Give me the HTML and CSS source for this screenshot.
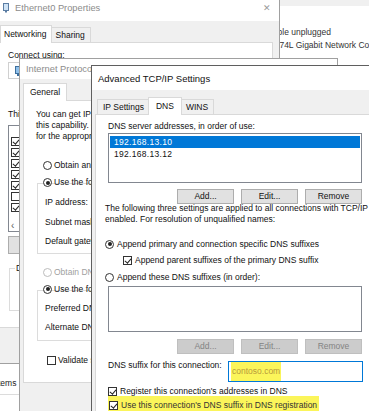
FILE: index.html
```html
<!DOCTYPE html>
<html lang="en">
<head>
    <meta charset="UTF-8">
    <meta name="viewport" content="width=device-width, initial-scale=1.0">
    <title>Advanced TCP/IP Settings</title>
    <link rel="stylesheet" href="styles.css">
</head>
<body>
<div class="desktop">

    <!-- Network Connections folder behind the dialogs -->
    <div class="win explorer">
        <div class="explorer-top"></div>
        <div class="explorer-item">
            <span>Network cable unplugged</span>
            <span>Intel(R) 82574L Gigabit Network Connection</span>
        </div>
        <div class="explorer-status">4 items</div>
    </div>

    <!-- Ethernet0 Properties -->
    <div class="win eth">
        <div class="titlebar inactive">
            <svg class="app-icon" width="6" height="10" viewBox="0 0 6 10">
                <rect x="0.5" y="0.5" width="5" height="7" fill="#cfe3f5" stroke="#5b7da3"/>
                <rect x="2" y="7.5" width="2" height="2" fill="#5b7da3"/>
            </svg>
            <span>Ethernet0 Properties</span>
            <span class="close">&#x2715;</span>
        </div>
        <div class="tabs">
            <span class="tab active">Networking</span>
            <span class="tab">Sharing</span>
        </div>
        <div class="page eth-page">
            <div class="label">Connect using:</div>
            <div class="adapter">
                <svg width="7" height="10" viewBox="0 0 7 10">
                    <rect x="0.5" y="0.5" width="6" height="7" fill="#8fc0ea" stroke="#3d6f9e"/>
                    <rect x="2" y="8" width="3" height="2" fill="#3d6f9e"/>
                </svg>
                <span>Intel(R) 82574L Gigabit Network Connection</span>
            </div>
            <div class="label items-label">This connection uses the following items:</div>
            <div class="items">
                <div class="item"><span class="check on"></span>Client for Microsoft Networks</div>
                <div class="item"><span class="check on"></span>File and Printer Sharing</div>
                <div class="item"><span class="check on"></span>QoS Packet Scheduler</div>
                <div class="item"><span class="check on"></span>Internet Protocol Version 4</div>
                <div class="item"><span class="check on"></span>Microsoft Network Adapter</div>
                <div class="item"><span class="check"></span>Microsoft LLDP Protocol</div>
                <div class="item"><span class="check on"></span>Internet Protocol Version 6</div>
                <div class="hscroll">&lsaquo;</div>
            </div>
            <div class="eth-buttons">
                <span class="btn">Install...</span>
            </div>
            <fieldset class="group desc">
                <legend>Description</legend>
            </fieldset>
        </div>
    </div>

    <!-- Internet Protocol Version 4 (TCP/IPv4) Properties -->
    <div class="win ipv4">
        <div class="titlebar inactive">
            <span>Internet Protocol Version 4 (TCP/IPv4) Properties</span>
            <span class="close">&#x2715;</span>
        </div>
        <div class="tabs">
            <span class="tab active">General</span>
        </div>
        <div class="page ipv4-page">
            <p class="intro">You can get IP settings assigned automatically if your network supports<br>
                this capability. Otherwise, you need to ask your network administrator<br>
                for the appropriate IP settings.</p>
            <div class="option"><span class="radio"></span>Obtain an IP address automatically</div>
            <div class="option"><span class="radio on"></span>Use the following IP address:</div>
            <div class="group ip-group">
                <div class="field">IP address:</div>
                <div class="field">Subnet mask:</div>
                <div class="field">Default gateway:</div>
            </div>
            <div class="option disabled"><span class="radio"></span>Obtain DNS server address automatically</div>
            <div class="option"><span class="radio on"></span>Use the following DNS server addresses:</div>
            <div class="group dns-group">
                <div class="field">Preferred DNS server:</div>
                <div class="field">Alternate DNS server:</div>
            </div>
            <div class="option validate"><span class="check"></span>Validate settings upon exit</div>
        </div>
    </div>

    <!-- Advanced TCP/IP Settings -->
    <div class="win adv">
        <div class="titlebar">
            <span>Advanced TCP/IP Settings</span>
        </div>
        <div class="tabs">
            <span class="tab">IP Settings</span>
            <span class="tab active">DNS</span>
            <span class="tab">WINS</span>
        </div>
        <div class="page adv-page">
            <div class="label">DNS server addresses, in order of use:</div>
            <div class="listbox servers">
                <div class="row selected">192.168.13.10</div>
                <div class="row">192.168.13.12</div>
            </div>
            <div class="btn-row">
                <span class="btn">Add...</span>
                <span class="btn">Edit...</span>
                <span class="btn">Remove</span>
            </div>
            <p class="note">The following three settings are applied to all connections with TCP/IP<br>
                enabled. For resolution of unqualified names:</p>
            <div class="option first"><span class="radio on"></span>Append primary and connection specific DNS suffixes</div>
            <div class="option sub"><span class="check on"></span>Append parent suffixes of the primary DNS suffix</div>
            <div class="option"><span class="radio"></span>Append these DNS suffixes (in order):</div>
            <div class="listbox suffixes"></div>
            <div class="btn-row lower">
                <span class="btn disabled">Add...</span>
                <span class="btn disabled">Edit...</span>
                <span class="btn disabled">Remove</span>
            </div>
            <div class="suffix-row">
                <span class="suffix-label">DNS suffix for this connection:</span>
                <span class="input"><mark class="marker">contoso.com</mark></span>
            </div>
            <div class="option reg"><span class="check on"></span>Register this connection's addresses in DNS</div>
            <div class="option reg"><mark class="marker line"><span class="check on"></span>Use this connection's DNS suffix in DNS registration</mark></div>
        </div>
    </div>

</div>
</body>
</html>
```

FILE: styles.css
```css
* {
    box-sizing: border-box;
}
body {
    margin: 0;
    font-family: "Liberation Sans", Arial, sans-serif;
    font-size: 8.5px;
    line-height: 11px;
    color: #111;
    background: #fff;
}
p {
    margin: 0;
}
.desktop {
    position: relative;
    width: 369px;
    height: 411px;
    overflow: hidden;
}

/* windows */
.win {
    position: absolute;
    background: #f0f0f0;
    border: 1px solid #a0a0a0;
    display: flex;
    flex-direction: column;
}
.titlebar {
    display: flex;
    align-items: center;
    flex-shrink: 0;
    background: #fff;
    font-size: 9.3px;
    white-space: nowrap;
}
.titlebar.inactive {
    color: #8c8c8c;
}
.titlebar .close {
    margin-left: auto;
    font-size: 9px;
    color: #9a9a9a;
}

.explorer {
    left: -20px;
    top: -10px;
    width: 400px;
    height: 430px;
    background: #fff;
    border: none;
}
.explorer-top {
    height: 16px;
    background: #f0f0f0;
}
.explorer-item {
    display: flex;
    flex-direction: column;
    margin: 20px 0 0 255px;
    line-height: 13px;
    font-size: 8.5px;
    color: #333;
    white-space: nowrap;
}
.explorer-status {
    margin-top: auto;
    margin-bottom: 25px;
    height: 33px;
    padding: 15px 0 0 9px;
    border-top: 1px solid #dcdcdc;
    border-bottom: 1px solid #dcdcdc;
    color: #222;
}

.eth {
    left: -12px;
    top: -6px;
    width: 292px;
    height: 370px;
}
.eth .titlebar {
    height: 26px;
    padding: 0 8px 0 14px;
}
.app-icon {
    margin-right: 6px;
}

.ipv4 {
    left: 19px;
    top: 58px;
    width: 319px;
    height: 360px;
}
.ipv4 .titlebar {
    height: 20px;
    padding: 0 10px 0 6px;
}

.adv {
    left: 91px;
    top: 65px;
    width: 300px;
    height: 400px;
    border-color: #5f5f5f;
}
.adv .titlebar {
    height: 24px;
    padding-left: 6px;
    font-size: 9.5px;
}

/* tabs */
.tabs {
    display: flex;
    align-items: flex-end;
    flex-shrink: 0;
    position: relative;
    z-index: 1;
}
.tab {
    height: 15px;
    padding: 0 5px;
    line-height: 14px;
    background: #f0f0f0;
    border: 1px solid #d9d9d9;
    border-bottom: none;
}
.tab.active {
    height: 18px;
    line-height: 16px;
    padding: 0 7px;
    margin: 0 -2px -1px;
    background: #fff;
    position: relative;
}
.tab.active:first-child {
    margin-left: 0;
}
.page {
    flex: 1;
    background: #fff;
    border: 1px solid #d9d9d9;
}

/* ethernet page */
.eth .tabs {
    height: 21px;
    padding-left: 11px;
}
.eth .tab.active {
    padding: 0 4px 0 3px;
}
.eth-page {
    margin: 0 6px 35px 9px;
    padding: 7px 0 0 9px;
}
.label {
    white-space: nowrap;
}
.adapter {
    display: flex;
    align-items: center;
    gap: 5px;
    width: 250px;
    height: 17px;
    margin-top: 1px;
    padding-left: 6px;
    border: 1px solid #d0d0d0;
    white-space: nowrap;
}
.items-label {
    margin-top: 30px;
}
.items {
    width: 250px;
    height: 107px;
    margin-top: 5px;
    padding: 10px 2px 0;
    border: 1px solid #828790;
}
.item {
    display: flex;
    align-items: center;
    gap: 4px;
    height: 11px;
    white-space: nowrap;
}
.hscroll {
    height: 12px;
    margin-top: 7px;
    line-height: 11px;
    font-size: 10px;
    color: #606060;
}
.eth-buttons {
    margin-top: 4px;
    height: 18px;
}
.eth-buttons .btn {
    width: 60px;
    height: 18px;
    line-height: 16px;
}
.group {
    border: 1px solid #dcdcdc;
    margin: 0;
    padding: 0;
}
.desc {
    width: 250px;
    height: 48px;
    margin-top: 9px;
    margin-left: 1px;
}
.desc legend {
    padding: 0 1px;
    margin-left: 5px;
}

/* ipv4 general page */
.ipv4 .tabs {
    height: 21px;
    padding-left: 3px;
}
.ipv4 .tab.active {
    padding: 0 6px;
}
.ipv4-page {
    margin: 0 8px 34px 3px;
    padding: 8px 0 0 12px;
}
.intro {
    white-space: nowrap;
}
.option {
    display: flex;
    align-items: center;
    gap: 2px;
    height: 17px;
    white-space: nowrap;
}
.ipv4-page .option {
    padding-left: 7px;
}
.ipv4-page .intro + .option {
    margin-top: 15px;
}
.ipv4-page .option.disabled {
    color: #a0a0a0;
}
.ip-group,
.dns-group {
    width: 280px;
    margin: -8px 0 0 1px;
    padding: 9px 0 1px 7px;
}
.dns-group {
    padding: 8px 0 2px 7px;
}
.field {
    height: 19.5px;
    line-height: 19.5px;
    white-space: nowrap;
}
.ip-group + .option {
    margin-top: 10px;
}
.option.validate {
    margin-top: 11px;
    padding-left: 11px;
}

/* radios and checkboxes */
.radio {
    width: 9px;
    height: 9px;
    border: 1px solid #333;
    border-radius: 50%;
    background: #fff;
    flex-shrink: 0;
    position: relative;
}
.option.disabled .radio {
    border-color: #bcbcbc;
}
.radio.on::after {
    content: "";
    position: absolute;
    left: 1.5px;
    top: 1.5px;
    width: 4px;
    height: 4px;
    border-radius: 50%;
    background: #222;
}
.check {
    width: 9px;
    height: 9px;
    border: 1px solid #333;
    background: #fff;
    flex-shrink: 0;
    position: relative;
}
.check.on::after {
    content: "";
    position: absolute;
    left: 2px;
    top: 0;
    width: 2.5px;
    height: 5px;
    border: solid #222;
    border-width: 0 1px 1px 0;
    transform: rotate(40deg);
}

/* advanced dns page */
.adv .tabs {
    height: 24px;
    padding-left: 5px;
}
.adv-page {
    margin-left: 3px;
    padding: 6px 0 0 12px;
    border-right: none;
}
.listbox {
    width: 254px;
    border: 1px solid #828790;
    background: #fff;
}
.servers {
    height: 50px;
    margin-top: 1px;
    padding: 2px 1px;
}
.row {
    height: 12px;
    line-height: 12px;
    padding-left: 4px;
    letter-spacing: 0.3px;
}
.row.selected {
    background: #0078d7;
    color: #fff;
}
.btn-row {
    display: flex;
    justify-content: flex-end;
    gap: 7px;
    width: 254px;
    margin-top: 6px;
}
.btn-row.lower {
    margin-top: 7px;
}
.btn {
    display: inline-block;
    width: 57px;
    height: 15px;
    line-height: 13px;
    text-align: center;
    background: #e1e1e1;
    border: 1px solid #adadad;
}
.btn.disabled {
    background: #cccccc;
    border-color: #bfbfbf;
    color: #838383;
}
.note {
    margin-top: -1px;
    margin-left: -3px;
    white-space: nowrap;
}
.adv-page .option {
    height: 16px;
    margin-left: -3px;
    gap: 3px;
}
.adv-page .option.first {
    margin-top: 11px;
}
.adv-page .option.sub {
    margin-left: 15px;
}
.adv-page .option.sub + .option {
    margin-top: 1px;
}
.suffixes {
    height: 46px;
    margin-top: 1px;
}
.suffix-row {
    display: flex;
    align-items: flex-start;
    justify-content: space-between;
    width: 255px;
    height: 21px;
    margin-top: 7px;
    white-space: nowrap;
}
.suffix-label {
    margin-top: -1px;
}
.input {
    display: flex;
    align-items: center;
    width: 135px;
    height: 21px;
    padding-left: 2px;
    border: 1px solid #0078d7;
    background: #fff;
}
.marker {
    background: #fbf55a;
    color: #b79a3c;
    padding: 4px 1px;
}
.marker.line {
    display: flex;
    align-items: center;
    gap: 3px;
    color: #333;
    padding: 4px 2px 4px 1px;
}
.adv-page .option.reg {
    height: 14px;
    margin-left: 0;
}
.suffix-row + .option.reg {
    margin-top: 2px;
}
```
